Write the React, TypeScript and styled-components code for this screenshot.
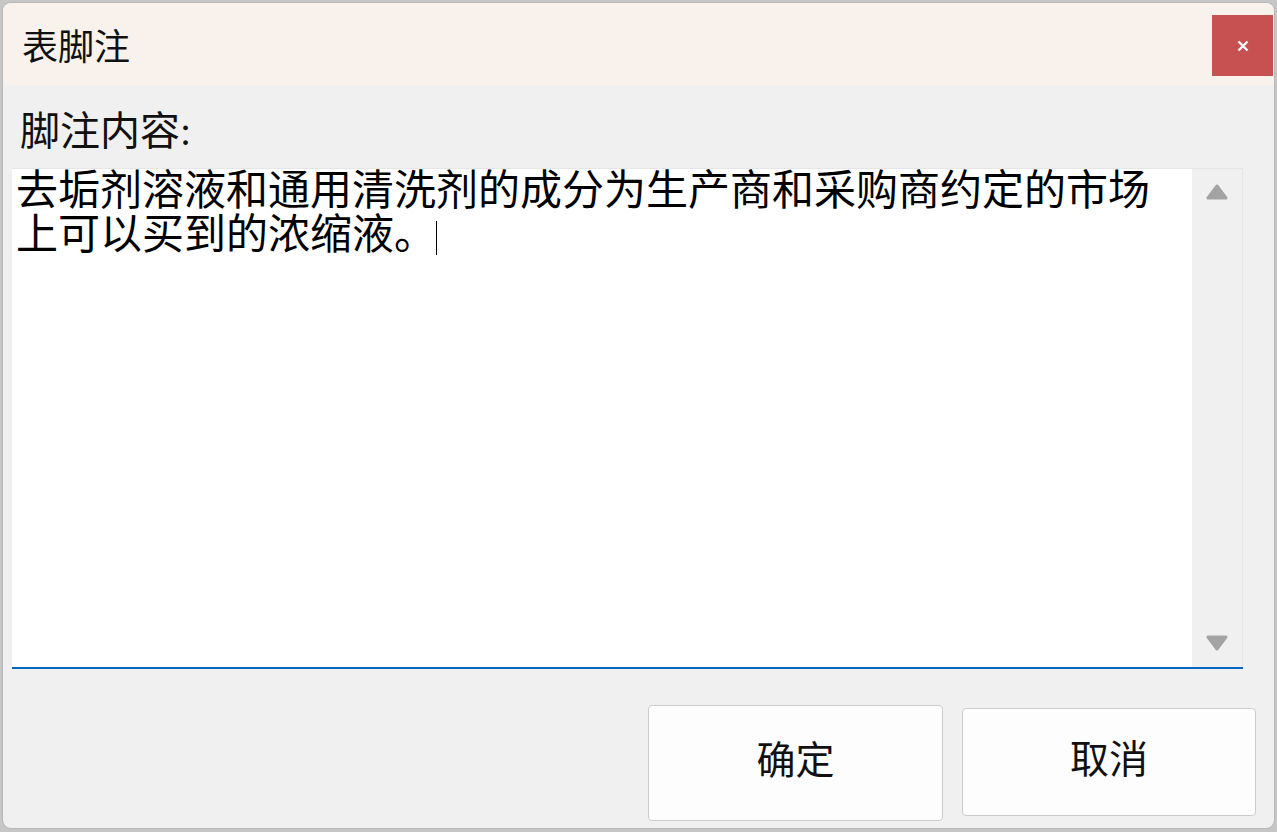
import React from 'react';
import styled, { createGlobalStyle } from 'styled-components';

const GlobalStyle = createGlobalStyle`
  html, body {
    margin: 0;
    padding: 0;
    background: #c6c6c6;
    overflow: hidden;
  }
  #root {
    width: 1277px;
    height: 832px;
    padding: 3px 3px 4px 3px;
    box-sizing: border-box;
  }
`;

const SERIF = `"Liberation Serif", "Noto Sans CJK SC", serif`;
const SANS = `"Noto Sans CJK SC", "Noto Sans", sans-serif`;

const Window = styled.div`
  width: 1271px;
  height: 825px;
  background: #f0f0f0;
  border-radius: 8px;
  overflow: hidden;
  display: flex;
  flex-direction: column;
  box-shadow: 0 0 0 1px #b8b8b8;
`;

const TitleBar = styled.div`
  height: 82px;
  flex-shrink: 0;
  background: #f9f1ec;
  display: flex;
  align-items: center;
  justify-content: space-between;
  padding: 0 1px 0 19px;
`;

const Title = styled.div`
  font-family: ${SANS};
  font-size: 36px;
  color: #111;
  line-height: 1;
`;

const CloseButton = styled.button`
  width: 61px;
  height: 61px;
  margin-top: 12px;
  align-self: flex-start;
  border: none;
  padding: 0;
  background: #c75050;
  display: flex;
  align-items: center;
  justify-content: center;
`;

const Body = styled.div`
  flex: 1;
  display: flex;
  flex-direction: column;
  padding: 27px 31px 0 9px;
`;

const Label = styled.div`
  font-family: ${SERIF};
  font-size: 40px;
  line-height: 40px;
  color: #111;
  padding-left: 8px;
  margin-bottom: 16px;
`;

const Editor = styled.div`
  height: 499px;
  display: flex;
  background: #fff;
  border-bottom: 2px solid #0067c0;
  box-shadow: inset 0 1px 0 #e6e6e6, inset -1px 0 0 #e6e6e6;
`;

const EditorText = styled.div`
  flex: 1;
  padding: 1px 8px 0 4px;
  font-family: ${SERIF};
  font-size: 42px;
  line-height: 44px;
  color: #000;
  word-break: break-all;
`;

const Caret = styled.span`
  display: inline-block;
  width: 1px;
  height: 34px;
  background: #000;
  vertical-align: -6px;
  margin-left: 0;
`;

const ScrollBar = styled.div`
  width: 50px;
  margin: 1px 1px 0 0;
  background: #f0f0f0;
  display: flex;
  flex-direction: column;
  justify-content: space-between;
  align-items: center;
  padding: 15px 0 16px;
`;

const Footer = styled.div`
  display: flex;
  justify-content: flex-end;
  align-items: center;
  gap: 19px;
  margin-top: 36px;
  margin-right: -13px;
`;

const DialogButton = styled.button<{ $primary?: boolean }>`
  width: ${(p) => (p.$primary ? 295 : 294)}px;
  height: ${(p) => (p.$primary ? 116 : 108)}px;
  background: #fdfdfd;
  border: 1px solid #cccccc;
  border-radius: 4px;
  font-family: ${SERIF};
  font-size: 39px;
  color: #111;
  padding: 0 0 12px;
  margin-top: ${(p) => (p.$primary ? 0 : -2)}px;
`;

const Arrow = ({ down }: { down?: boolean }) => (
  <svg width="22" height="16" viewBox="0 0 22 16">
    <path
      d={down ? 'M2 2 H20 L11 14 Z' : 'M2 14 H20 L11 2 Z'}
      fill="#a3a3a3"
      stroke="#a3a3a3"
      strokeWidth="3"
      strokeLinejoin="round"
    />
  </svg>
);

export default function App() {
  return (
    <>
      <GlobalStyle />
      <Window>
        <TitleBar>
          <Title>表脚注</Title>
          <CloseButton aria-label="关闭">
            <svg width="12" height="12" viewBox="0 0 12 12">
              <path d="M1.5 1.5 L10.5 10.5 M10.5 1.5 L1.5 10.5" stroke="#fff" strokeWidth="2.4" />
            </svg>
          </CloseButton>
        </TitleBar>
        <Body>
          <Label>脚注内容:</Label>
          <Editor>
            <EditorText>
              去垢剂溶液和通用清洗剂的成分为生产商和采购商约定的市场上可以买到的浓缩液。
              <Caret />
            </EditorText>
            <ScrollBar>
              <Arrow />
              <Arrow down />
            </ScrollBar>
          </Editor>
          <Footer>
            <DialogButton $primary>确定</DialogButton>
            <DialogButton>取消</DialogButton>
          </Footer>
        </Body>
      </Window>
    </>
  );
}
